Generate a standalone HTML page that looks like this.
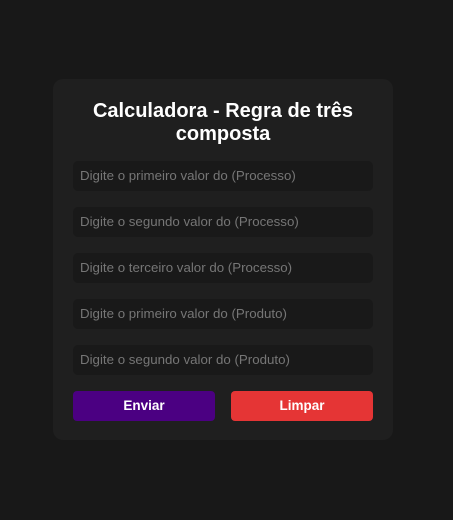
<!DOCTYPE html><html><head><style>
body{margin:0;background:#181818;width:453px;height:520px;font-family:"Liberation Sans",sans-serif;position:relative}
.card{position:absolute;left:53px;top:79px;width:340px;height:361px;background:#1f1f1f;border-radius:10px}
h1{position:absolute;left:0;width:340px;top:21px;margin:0;text-align:center;color:#fff;font-size:20px;line-height:23px;font-weight:bold}
.in{position:absolute;left:20px;width:300px;height:30px;background:#191919;border-radius:5px;color:#767676;font-size:13.3px;line-height:30px;padding-left:7px;box-sizing:border-box}
.b{position:absolute;top:312px;height:30px;width:142px;border-radius:4px;color:#fff;font-weight:bold;font-size:13.5px;text-align:center;line-height:30px}
</style></head><body><div class="card">
<h1>Calculadora - Regra de três<br>composta</h1>
<div class="in" style="top:82px">Digite o primeiro valor do (Processo)</div>
<div class="in" style="top:128px">Digite o segundo valor do (Processo)</div>
<div class="in" style="top:174px">Digite o terceiro valor do (Processo)</div>
<div class="in" style="top:220px">Digite o primeiro valor do (Produto)</div>
<div class="in" style="top:266px">Digite o segundo valor do (Produto)</div>
<div class="b" style="left:20px;background:#4b0082">Enviar</div>
<div class="b" style="left:178px;background:#e53535">Limpar</div>
</div></body></html>
